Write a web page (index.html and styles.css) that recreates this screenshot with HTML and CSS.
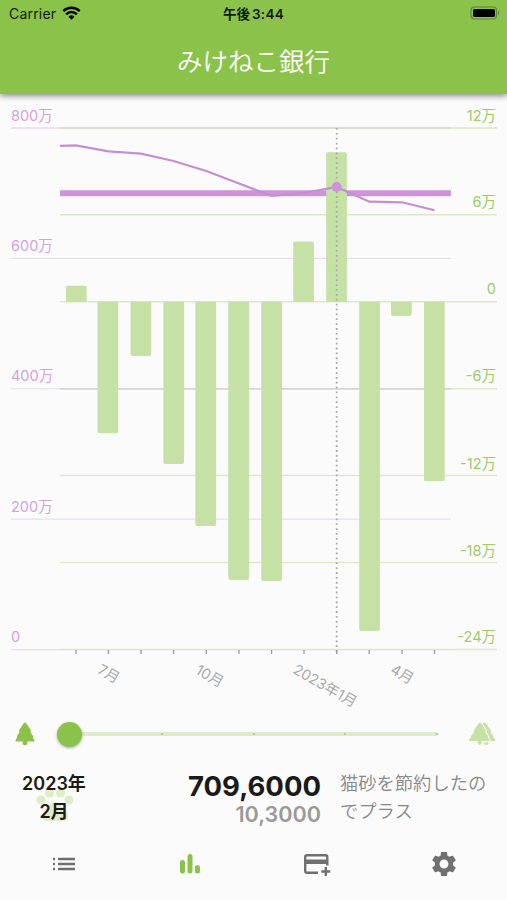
FILE: index.html
```html
<!DOCTYPE html>
<html lang="ja">

<head>
    <meta charset="utf-8">
    <meta name="viewport" content="width=device-width, initial-scale=1.0">
    <title>みけねこ銀行</title>
    <link rel="stylesheet" href="styles.css">
</head>

<body>
    <header class="header">
        <div class="status">
            <div class="carrier">
                <span>Carrier</span>
                <svg width="19" height="14" viewBox="0 0 19 14">
                    <path class="wifi" d="M1.3 5.2a11.6 11.6 0 0 1 16.4 0M4.2 8.3a7.5 7.5 0 0 1 10.6 0" />
                    <path d="M9.5 13.7L6.5 10.8a4.3 4.3 0 0 1 6 0z" />
                </svg>
            </div>
            <div class="clock">午後<span>3:44</span></div>
            <svg class="battery" width="31" height="14" viewBox="0 0 31 14">
                <rect class="shell" x="1" y="1" width="25.5" height="12" rx="3.5" />
                <rect x="3" y="3" width="22" height="8" rx="1.5" />
                <path class="cap" d="M28 4.5q2.4 2.5 0 5z" />
            </svg>
        </div>
        <h1 class="title">みけねこ銀行</h1>
    </header>

    <main>
        <svg class="chart" width="507" height="618" viewBox="0 94 507 618">
            <g class="grid-left">
                <path d="M11 128H451M11 258.3H451M11 388.8H451M11 519.2H451M11 649.6H451" />
            </g>
            <g class="grid-right">
                <path d="M60 128H497M60 214.8H497M60 301.7H497M60 388.7H497M60 475.5H497M60 562.5H497M60 649.5H497" />
            </g>
            <path class="grid-both" d="M60 128H451M60 388.7H451" />
            <path class="average" d="M60 193.2H451" />
            <g class="bars">
                <path d="M66 301.7v-14q0-2 2-2h16.7q2 0 2 2v14z" />
                <path d="M97.5 301.7v129.6q0 2 2 2h16.7q2 0 2-2v-129.6z" />
                <path d="M130.5 301.7v52.3q0 2 2 2h16.7q2 0 2-2v-52.3z" />
                <path d="M163.4 301.7v160.3q0 2 2 2h16.7q2 0 2-2v-160.3z" />
                <path d="M195.4 301.7v222.3q0 2 2 2h16.7q2 0 2-2v-222.3z" />
                <path d="M228.3 301.7v276.3q0 2 2 2h16.7q2 0 2-2v-276.3z" />
                <path d="M261.3 301.7v277.3q0 2 2 2h16.7q2 0 2-2v-277.3z" />
                <path d="M293.2 301.7v-58.2q0-2 2-2h16.7q2 0 2 2v58.2z" />
                <path d="M326.2 301.7v-147.4q0-2 2-2h16.7q2 0 2 2v147.4z" />
                <path d="M359.2 301.7v327.3q0 2 2 2h16.7q2 0 2-2v-327.3z" />
                <path d="M391 301.7v12.3q0 2 2 2h16.7q2 0 2-2v-12.3z" />
                <path d="M424 301.7v177.3q0 2 2 2h16.7q2 0 2-2v-177.3z" />
            </g>
            <path class="cursor" d="M336.7 128V652" />
            <path class="balance" d="M60 145.8L76 145.3L108.5 151.3L141 153.6L173.6 161L206.3 171L239 183.5L271.6 196L304 193L336.7 187L369.3 201.7L402 202.3L434.5 210.3" />
            <circle class="point" cx="336.7" cy="187" r="5" />
            <path class="ticks" d="M76 650v4M108.5 650v4M141 650v4M173.6 650v4M206.3 650v4M239 650v4M271.6 650v4M304 650v4M336.7 650v4M369.3 650v4M402 650v4M434.5 650v4" />
            <g class="label-left">
                <text x="11" y="120.5">800万</text>
                <text x="11" y="251">600万</text>
                <text x="11" y="381">400万</text>
                <text x="11" y="511.5">200万</text>
                <text x="11" y="642">0</text>
            </g>
            <g class="label-right">
                <text x="496" y="120.5">12万</text>
                <text x="496" y="207">6万</text>
                <text x="496" y="294">0</text>
                <text x="496" y="381">-6万</text>
                <text x="496" y="468.5">-12万</text>
                <text x="496" y="555.5">-18万</text>
                <text x="496" y="642">-24万</text>
            </g>
            <g class="label-month">
                <text transform="translate(96.5 672.5) rotate(30)">7月</text>
                <text transform="translate(194.5 673) rotate(30)">10月</text>
                <text transform="translate(292 672.5) rotate(30)">2023年1月</text>
                <text transform="translate(389.5 672.5) rotate(30)">4月</text>
            </g>
        </svg>

        <div class="slider">
            <svg class="tree" width="20" height="24" viewBox="0 0 20 24">
                <path d="M10 .5q.8 0 1.3.8L16 8.5q.5 1-.7 1.3L18 14q.4.8-.3 1L19.5 18.5q.3 1-.7 1H12.3v2q0 1.8-1.8 1.8h-1q-1.8 0-1.8-1.8v-2H1.2q-1 0-.7-1L2.3 15q-.7-.2-.3-1L4.7 9.8q-1.2-.3-.7-1.3L8.7 1.3q.5-.8 1.3-.8z" />
            </svg>
            <div class="track">
                <i class="thumb"></i>
                <i class="mark"></i>
                <i class="mark"></i>
                <i class="mark"></i>
                <i class="mark"></i>
            </div>
            <svg class="tree forest" width="28" height="24" viewBox="0 0 28 24">
                <path d="M12 .5q.8 0 1.3.8L17.8 8.5q.3 1-.8 1.2L20 14q.3.8-.4 1L21.5 18q.2 1-.7 1H13.5v2.3q0 1.7-1.7 1.7t-1.7-1.7V19H1.5q-1 0-.7-1L3.3 15q-.6-.2-.2-1L6.5 9.7q-1.2-.2-.7-1.2L10.7 1.3q.5-.8 1.3-.8z" />
                <path d="M15 1.5q1.5-1.8 3 0L23 8.5q.3 1-.7 1.2L25.5 14q.2.8-.5 1L27.5 18q.3 1-.6 1H23.2L20.7 15q.9-.2.6-1L18.3 9.7q1.2-.2.7-1.2zM15.8 20.3h4.8v1q0 1.7-2.4 1.7t-2.4-1.7z" />
            </svg>
        </div>

        <div class="summary">
            <div class="date">
                <svg class="paw" width="38" height="34" viewBox="0 0 38 34">
                    <circle cx="5" cy="12" r="4.5" />
                    <circle cx="13.5" cy="5" r="4.5" />
                    <circle cx="24.5" cy="5" r="4.5" />
                    <circle cx="33" cy="12" r="4.5" />
                    <path d="M19 14c5 0 7 5 11 9c4 5 2 10-4 10q-7-1-14 0c-6 0-8-5-4-10c4-4 6-9 11-9z" />
                </svg>
                <span>2023年<br>2月</span>
            </div>
            <div class="amount">
                <div class="total">709,6000</div>
                <div class="diff">10,3000</div>
            </div>
            <div class="memo">猫砂を節約したの<br>でプラス</div>
        </div>
    </main>

    <nav class="nav">
        <a class="item">
            <svg class="list-icon" width="24" height="16" viewBox="0 0 24 16">
                <path class="list" d="M1 3h2M6 3H23M1 8h2M6 8H23M1 13h2M6 13H23" />
            </svg>
        </a>
        <a class="item">
            <svg width="22" height="22" viewBox="0 0 22 22">
                <path class="columns" d="M3.5 9.5v8.5M11 3.5v14.5M18.5 14.5v3.5" />
            </svg>
        </a>
        <a class="item">
            <svg width="28" height="24" viewBox="0 0 28 24">
                <path class="card" d="M15 20.8H4q-1.8 0-1.8-1.8V5q0-1.8 1.8-1.8H22.5q1.8 0 1.8 1.8v8.5" />
                <path d="M2 7.5h22.5v4.5H2z" />
                <path class="card" d="M22.8 15v9M18.3 19.5h9" />
            </svg>
        </a>
        <a class="item">
            <svg width="30" height="30" viewBox="0 0 24 24">
                <path d="M19.14 12.94c.04-.3.06-.61.06-.94 0-.32-.02-.64-.07-.94l2.03-1.58c.18-.14.23-.41.12-.61l-1.92-3.32c-.12-.22-.37-.29-.59-.22l-2.39.96c-.5-.38-1.03-.7-1.62-.94l-.36-2.54c-.04-.24-.24-.41-.48-.41h-3.84c-.24 0-.43.17-.47.41l-.36 2.54c-.59.24-1.13.57-1.62.94l-2.39-.96c-.22-.08-.47 0-.59.22L2.74 8.87c-.12.21-.08.47.12.61l2.03 1.58c-.05.3-.09.63-.09.94s.02.64.07.94l-2.03 1.58c-.18.14-.23.41-.12.61l1.92 3.32c.12.22.37.29.59.22l2.39-.96c.5.38 1.03.7 1.62.94l.36 2.54c.05.24.24.41.48.41h3.84c.24 0 .44-.17.47-.41l.36-2.54c.59-.24 1.13-.56 1.62-.94l2.39.96c.22.08.47 0 .59-.22l1.92-3.32c.12-.22.07-.47-.12-.61l-2.01-1.58zM12 15.6c-1.98 0-3.6-1.62-3.6-3.6s1.62-3.6 3.6-3.6 3.6 1.62 3.6 3.6-1.62 3.6-3.6 3.6z" />
            </svg>
        </a>
    </nav>
</body>

</html>
```
FILE: styles.css
```css
body {
    margin: 0;
    width: 507px;
    height: 900px;
    overflow: hidden;
    background: #fbfbfb;
    font-family: Inter, "Noto Sans CJK JP", sans-serif;
    color: #1a1a1a;
}

svg {
    display: block;
}

.header {
    height: 94px;
    background: #8bc34a;
    box-shadow: 0 2px 6px rgba(0, 0, 0, 0.45);
}

.status {
    display: grid;
    grid-template-columns: 1fr auto 1fr;
    align-items: center;
    height: 27px;
    padding: 0 6px 0 9px;
    font-size: 14px;
    color: #10180a;
}

.carrier {
    display: flex;
    align-items: center;
    gap: 6px;
    letter-spacing: 0.2px;
}

.carrier svg {
    margin-top: -2px;
}

.wifi {
    fill: none;
    stroke: #000;
    stroke-width: 2.5;
}

.clock {
    margin-left: -3px;
    font-size: 13.5px;
    font-weight: 700;
    line-height: 20px;
}

.clock span {
    margin-left: 2px;
    font-weight: 600;
    letter-spacing: 0.3px;
}

.battery {
    justify-self: end;
    margin-top: -1px;
}

.shell {
    fill: none;
    stroke: #5f8635;
    stroke-width: 1.2;
}

.cap {
    fill: #5f8635;
}

.title {
    margin: 0;
    font-family: "Noto Sans CJK JP", sans-serif;
    font-size: 25.5px;
    font-weight: 350;
    line-height: 66px;
    text-align: center;
    color: #fff;
}

.grid-left {
    stroke: #ebdcf0;
    stroke-width: 1.3;
}

.grid-right {
    stroke: #dbe9c8;
    stroke-width: 1.5;
}

.grid-both {
    stroke: #d6d6d2;
    stroke-width: 1.5;
}

.average {
    stroke: #ce93d8;
    stroke-width: 6;
}

.bars {
    fill: #c5e1a5;
}

.cursor {
    stroke: #aaa;
    stroke-width: 1.8;
    stroke-dasharray: 1.8 3.08;
}

.balance {
    fill: none;
    stroke: #c48fd2;
    stroke-width: 2.2;
}

.point {
    fill: #ce93d8;
}

.ticks {
    stroke: #999;
    stroke-width: 1.3;
}

.label-left,
.label-right,
.label-month {
    font-size: 14.5px;
    fill: #d3a3dd;
}

.label-right {
    fill: #9ccc65;
    text-anchor: end;
}

.label-month {
    fill: #aaa;
}

.slider {
    display: flex;
    align-items: center;
    height: 44px;
    padding: 0 11px 0 15px;
}

.tree {
    fill: #8bc34a;
}

.forest {
    fill: #c5e1a5;
}

.track {
    position: relative;
    display: flex;
    justify-content: space-between;
    align-items: center;
    flex: 1;
    height: 4px;
    margin: 0 30px 0 34px;
    padding-left: 92px;
    border-radius: 2px;
    background: #dcedc8;
}

.thumb {
    position: absolute;
    left: -12px;
    top: -10px;
    width: 25px;
    height: 25px;
    border-radius: 50%;
    background: #8bc34a;
    box-shadow: 0 1px 3px rgba(0, 0, 0, 0.35);
}

.mark {
    width: 2px;
    height: 2px;
    border-radius: 50%;
    background: #a5c584;
}

.summary {
    display: flex;
    height: 60px;
    padding: 13px 11px 0;
}

.date {
    position: relative;
    width: 86px;
    margin-top: 1px;
    font-size: 18px;
    font-weight: 600;
    line-height: 28px;
    text-align: center;
}

.date span {
    position: relative;
}

.paw {
    position: absolute;
    left: 25px;
    top: 18px;
    fill: #dcedc8;
}

.amount {
    width: 224px;
    text-align: right;
}

.total {
    font-size: 27.5px;
    font-weight: 650;
    line-height: 34px;
}

.diff {
    font-size: 21.6px;
    font-weight: 600;
    line-height: 22px;
    color: #999;
}

.memo {
    margin: -1px 0 0 19px;
    font-family: "Noto Sans CJK JP", sans-serif;
    font-size: 18.3px;
    font-weight: 350;
    line-height: 28px;
    white-space: nowrap;
    color: #888;
}

.nav {
    display: grid;
    grid-template-columns: repeat(4, 1fr);
    height: 70px;
}

.item {
    display: flex;
    align-items: center;
    justify-content: center;
    fill: #707070;
}

.list-icon {
    margin-left: 2px;
}

.list,
.card {
    fill: none;
    stroke: #707070;
    stroke-width: 2.4;
}

.columns {
    stroke: #8bc34a;
    stroke-width: 5;
    stroke-linecap: round;
}
```
